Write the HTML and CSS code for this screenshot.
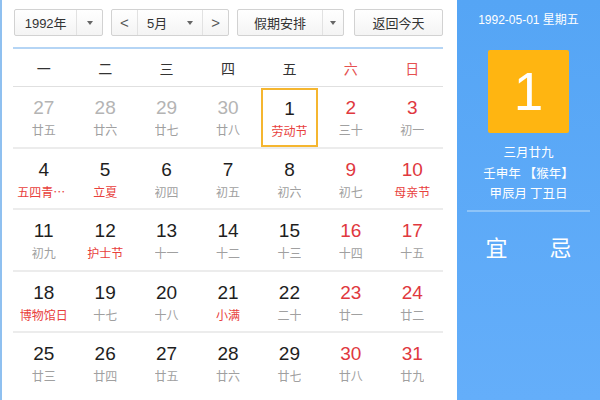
FILE: index.html
```html
<!DOCTYPE html>
<html lang="zh">
<head>
<meta charset="utf-8">
<link rel="stylesheet" href="styles.css">
</head>
<body>
<div class="page">
  <div class="cal">
    <div class="toolbar">
      <div class="sel sel-year"><span class="sel-text">1992年</span><span class="sel-arrow"><i class="tri"></i></span></div>
      <div class="sel sel-month">
        <span class="nav">&lt;</span>
        <span class="sel-text mtext">5月</span><span class="marrow"><i class="tri"></i></span>
        <span class="nav nav-r">&gt;</span>
      </div>
      <div class="sel sel-hol"><span class="sel-text">假期安排</span><span class="sel-arrow"><i class="tri"></i></span></div>
      <div class="btn">返回今天</div>
    </div>
    <div class="week">
      <span>一</span><span>二</span><span>三</span><span>四</span><span>五</span><span class="we">六</span><span class="we">日</span>
    </div>
    <div class="grid">
      <div class="row">
        <div class="cell other"><b>27</b><small>廿五</small></div>
        <div class="cell other"><b>28</b><small>廿六</small></div>
        <div class="cell other"><b>29</b><small>廿七</small></div>
        <div class="cell other"><b>30</b><small>廿八</small></div>
        <div class="cell today"><b>1</b><small class="fest">劳动节</small></div>
        <div class="cell we"><b>2</b><small>三十</small></div>
        <div class="cell we"><b>3</b><small>初一</small></div>
      </div>
      <div class="row">
        <div class="cell"><b>4</b><small class="fest">五四青年节</small></div>
        <div class="cell"><b>5</b><small class="fest">立夏</small></div>
        <div class="cell"><b>6</b><small>初四</small></div>
        <div class="cell"><b>7</b><small>初五</small></div>
        <div class="cell"><b>8</b><small>初六</small></div>
        <div class="cell we"><b>9</b><small>初七</small></div>
        <div class="cell we"><b>10</b><small class="fest">母亲节</small></div>
      </div>
      <div class="row">
        <div class="cell"><b>11</b><small>初九</small></div>
        <div class="cell"><b>12</b><small class="fest">护士节</small></div>
        <div class="cell"><b>13</b><small>十一</small></div>
        <div class="cell"><b>14</b><small>十二</small></div>
        <div class="cell"><b>15</b><small>十三</small></div>
        <div class="cell we"><b>16</b><small>十四</small></div>
        <div class="cell we"><b>17</b><small>十五</small></div>
      </div>
      <div class="row">
        <div class="cell"><b>18</b><small class="fest">博物馆日</small></div>
        <div class="cell"><b>19</b><small>十七</small></div>
        <div class="cell"><b>20</b><small>十八</small></div>
        <div class="cell"><b>21</b><small class="fest">小满</small></div>
        <div class="cell"><b>22</b><small>二十</small></div>
        <div class="cell we"><b>23</b><small>廿一</small></div>
        <div class="cell we"><b>24</b><small>廿二</small></div>
      </div>
      <div class="row last">
        <div class="cell"><b>25</b><small>廿三</small></div>
        <div class="cell"><b>26</b><small>廿四</small></div>
        <div class="cell"><b>27</b><small>廿五</small></div>
        <div class="cell"><b>28</b><small>廿六</small></div>
        <div class="cell"><b>29</b><small>廿七</small></div>
        <div class="cell we"><b>30</b><small>廿八</small></div>
        <div class="cell we"><b>31</b><small>廿九</small></div>
      </div>
    </div>
  </div>
  <div class="side">
    <div class="side-date">1992-05-01 星期五</div>
    <div class="big">1</div>
    <div class="lunar">
      <div>三月廿九</div>
      <div>壬申年 【猴年】</div>
      <div>甲辰月 丁丑日</div>
    </div>
    <div class="side-line"></div>
    <div class="yiji"><span>宜</span><span>忌</span></div>
  </div>
</div>
</body>
</html>
```
FILE: styles.css
```css
* { box-sizing: border-box; }
html, body { margin: 0; padding: 0; }
body {
  width: 600px;
  height: 400px;
  overflow: hidden;
  background: #fff;
  font-family: "Liberation Sans", Arial, "Noto Sans CJK SC", sans-serif;
}
.page {
  display: flex;
  height: 400px;
}
.cal {
  width: 457px;
  border-left: 2px solid #8fc0f0;
  padding: 9px 14px 0 11px;
}
.toolbar {
  display: flex;
  height: 27px;
  color: #333;
  font-size: 13px;
}
.sel, .btn {
  display: flex;
  align-items: stretch;
  border: 1px solid #d2d2d2;
  border-radius: 2px;
  background: linear-gradient(#fff, #f4f4f4);
}
.sel-text {
  display: flex;
  align-items: center;
  justify-content: center;
  font-family: "Liberation Sans", "Noto Sans CJK SC", sans-serif;
}
.sel-arrow, .marrow {
  display: flex;
  align-items: center;
  justify-content: center;
  width: 26px;
}
.sel-arrow { border-left: 1px solid #e2e2e2; }
.tri {
  display: block;
  width: 0;
  height: 0;
  border-left: 3px solid transparent;
  border-right: 3px solid transparent;
  border-top: 4px solid #666;
}
.sel-year { width: 89px; margin-left: 1px; }
.sel-year .sel-text { width: 62px; }
.sel-month { width: 118px; margin-left: 8px; }
.nav {
  width: 26px;
  display: flex;
  align-items: center;
  justify-content: center;
  color: #555;
  font-size: 15px;
  border-right: 1px solid #e2e2e2;
}
.nav-r { border-right: 0; border-left: 1px solid #e2e2e2; }
.mtext { width: 40px; }
.marrow { width: 26px; }
.sel-hol { width: 107px; margin-left: 8px; }
.sel-hol .sel-text { width: 85px; }
.sel-hol .sel-arrow { width: 21px; }
.btn {
  width: 90px;
  margin-left: 10px;
  justify-content: center;
  align-items: center;
  font-family: "Noto Sans CJK SC", sans-serif;
}
.week {
  display: grid;
  grid-template-columns: repeat(7, 1fr);
  margin-top: 11px;
  height: 40px;
  border-top: 2px solid #b5d5f5;
  border-bottom: 1px solid #e0e0e0;
  align-items: center;
  font-family: "Noto Sans CJK SC", sans-serif;
  font-size: 14px;
  color: #333;
  text-align: center;
}
.week .we { color: #e55050; }
.row {
  display: grid;
  grid-template-columns: repeat(7, 1fr);
  height: 61.5px;
  border-bottom: 2px solid #ececec;
}
.row.last { border-bottom: 0; }
.cell {
  display: flex;
  flex-direction: column;
  align-items: center;
  padding-top: 11px;
  min-width: 0;
}
.cell b {
  font-weight: normal;
  font-size: 19px;
  line-height: 20px;
  color: #1e1e1e;
}
.cell small {
  margin-top: 3px;
  font-family: "Noto Sans CJK SC", sans-serif;
  font-size: 12px;
  line-height: 18px;
  color: #a0a0a0;
  max-width: 53px;
  white-space: nowrap;
  overflow: hidden;
  text-overflow: ellipsis;
}
.cell.other b { color: #b4b4b4; }
.cell.we b { color: #e0383e; }
.cell small.fest { color: #e8403c; }
.cell.today {
  border: 2px solid #f5b630;
  margin: 1px 2px 0 2px;
  padding-top: 9px;
}
.side {
  flex: 1;
  background: linear-gradient(#55a5f5, #64aefa);
  color: #fff;
  display: flex;
  flex-direction: column;
  align-items: center;
  font-family: "Liberation Sans", "Noto Sans CJK SC", sans-serif;
}
.side-date {
  margin-top: 12px;
  font-size: 12px;
  line-height: 16px;
}
.big {
  margin-top: 22px;
  width: 81px;
  height: 83px;
  background: #ffb511;
  border-radius: 2px;
  display: flex;
  align-items: center;
  justify-content: center;
  font-size: 53px;
}
.lunar {
  margin-top: 9px;
  text-align: center;
  font-family: "Noto Sans CJK SC", sans-serif;
  font-size: 12.5px;
  line-height: 20.5px;
}
.side-line {
  margin-top: 6px;
  width: 123px;
  height: 2px;
  background: #8ec4f8;
}
.yiji {
  margin-top: 20px;
  display: flex;
  gap: 42px;
  font-family: "Noto Sans CJK SC", sans-serif;
  font-size: 22px;
  line-height: 28px;
}
```
